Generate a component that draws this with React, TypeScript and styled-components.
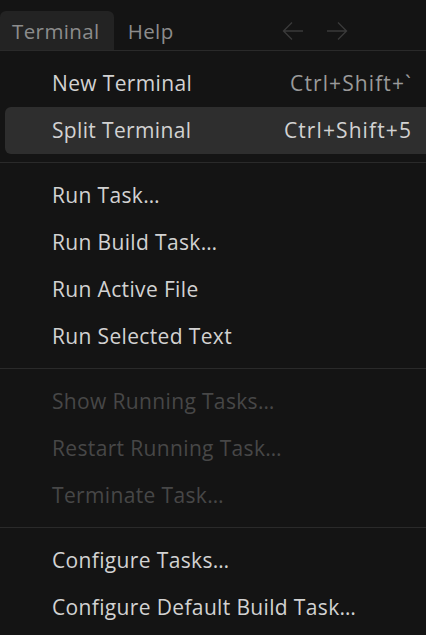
import styled, { createGlobalStyle } from "styled-components";

const GlobalStyle = createGlobalStyle`
  html, body {
    margin: 0;
    padding: 0;
    background: #141414;
    overflow: hidden;
  }
  body {
    font-family: "Open Sans", "Noto Sans", "Liberation Sans", sans-serif;
  }
`;

const Page = styled.div`
  width: 426px;
  height: 635px;
  background: #141414;
  overflow: hidden;
`;

const MenuBar = styled.div`
  display: flex;
  align-items: flex-end;
  height: 50px;
`;

const BarItem = styled.div<{ $open?: boolean }>`
  display: flex;
  align-items: center;
  height: 39px;
  padding: 1px 14px 0 12px;
  box-sizing: border-box;
  border-radius: 6px 6px 0 0;
  background: ${(p) => (p.$open ? "#232323" : "transparent")};
  color: #8c8c8c;
  font-size: 20.5px;
  letter-spacing: 0.4px;

  & + & {
    padding-left: 14px;
  }
`;

const Arrows = styled.div`
  display: flex;
  align-items: center;
  gap: 20px;
  height: 39px;
  margin-left: 93px;
  color: #3a3a3a;
`;

const Menu = styled.div`
  width: 440px;
  border-top: 1px solid #2a2a2a;
  background: #141414;
`;

const Group = styled.div`
  padding: 9px 0 8px;
`;

const Separator = styled.div`
  height: 1px;
  background: #2a2a2a;
`;

const Item = styled.div<{ $active?: boolean; $disabled?: boolean }>`
  display: flex;
  align-items: center;
  justify-content: space-between;
  height: 47px;
  margin: 0 5px;
  padding: 0 23px 0 47px;
  border-radius: 6px;
  background: ${(p) => (p.$active ? "#2e2e2e" : "transparent")};
  color: ${(p) => (p.$disabled ? "#474747" : "#d2d2d2")};
  font-size: 21px;
  letter-spacing: 0.35px;
  line-height: 1;
`;

const Shortcut = styled.span<{ $active?: boolean }>`
  color: ${(p) => (p.$active ? "#d2d2d2" : "#9a9a9a")};
  letter-spacing: 1.1px;
`;

type Entry = { label: string; shortcut?: string; active?: boolean; disabled?: boolean };

const groups: Entry[][] = [
  [
    { label: "New Terminal", shortcut: "Ctrl+Shift+`" },
    { label: "Split Terminal", shortcut: "Ctrl+Shift+5", active: true },
  ],
  [
    { label: "Run Task…" },
    { label: "Run Build Task…" },
    { label: "Run Active File" },
    { label: "Run Selected Text" },
  ],
  [
    { label: "Show Running Tasks…", disabled: true },
    { label: "Restart Running Task…", disabled: true },
    { label: "Terminate Task…", disabled: true },
  ],
  [{ label: "Configure Tasks…" }, { label: "Configure Default Build Task…" }],
];

const Arrow = ({ dir }: { dir: "left" | "right" }) => (
  <svg width="24" height="24" viewBox="0 0 24 24" fill="none" stroke="currentColor" strokeWidth="1.4">
    {dir === "left" ? (
      <path d="M22 12H2.5M11 3.5 2.5 12 11 20.5" />
    ) : (
      <path d="M2 12h19.5M13 3.5l8.5 8.5-8.5 8.5" />
    )}
  </svg>
);

const App = () => {
  return (
    <Page>
      <GlobalStyle />
      <MenuBar>
        <BarItem $open>Terminal</BarItem>
        <BarItem>Help</BarItem>
        <Arrows>
          <Arrow dir="left" />
          <Arrow dir="right" />
        </Arrows>
      </MenuBar>
      <Menu>
        {groups.map((g, i) => (
          <div key={i}>
            {i > 0 && <Separator />}
            <Group>
              {g.map((e) => (
                <Item key={e.label} $active={e.active} $disabled={e.disabled}>
                  <span>{e.label}</span>
                  {e.shortcut && <Shortcut $active={e.active}>{e.shortcut}</Shortcut>}
                </Item>
              ))}
            </Group>
          </div>
        ))}
      </Menu>
    </Page>
  );
};

export default App;
